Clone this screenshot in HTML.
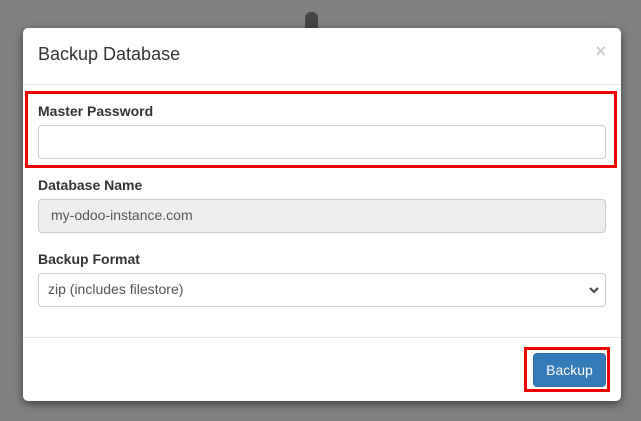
<!DOCTYPE html><html><head><style>
body{margin:0;width:641px;height:421px;background:#808080;position:relative;overflow:hidden;font-family:"Liberation Sans",sans-serif;color:#333}
.knob{position:absolute;left:305px;top:12px;width:13px;height:20px;background:#444;border-radius:6px 6px 0 0}
.modal{position:absolute;left:23px;top:28px;width:598px;height:373px;background:#fff;border-radius:5px;box-shadow:0 3px 9px rgba(0,0,0,.5)}
.title{position:absolute;left:15px;top:16px;font-size:18px;color:#333}
.x{position:absolute;right:15px;top:13px;font-size:18px;font-weight:bold;color:#ccc}
.hl{position:absolute;left:0;right:0;height:1px;background:#e5e5e5}
.red{position:absolute;border:3px solid #e00;box-sizing:border-box}
label{position:absolute;left:15px;font-size:14px;font-weight:bold;color:#333}
.in{position:absolute;left:15px;width:568px;height:34px;border:1px solid #ccc;border-radius:4px;box-sizing:border-box;font-size:14px;color:#555;padding:7px 12px}
.btn{position:absolute;left:510px;top:325px;width:73px;height:34px;background:#337ab7;border:1px solid #2e6da4;border-radius:4px;box-sizing:border-box;color:#fff;font-size:14px;text-align:center;line-height:32px}
</style></head><body>
<div class="knob"></div>
<div class="modal">
<div class="title">Backup Database</div><div class="x">×</div>
<div class="hl" style="top:56px"></div>
<div class="red" style="left:2px;top:63px;width:592px;height:77px"></div>
<label style="top:75px">Master Password</label>
<div class="in" style="top:97px"></div>
<label style="top:149px">Database Name</label>
<div class="in" style="top:171px;background:#eee">my-odoo-instance.com</div>
<label style="top:223px">Backup Format</label>
<div class="in" style="top:245px;padding-left:9px;color:#555">zip (includes filestore)<svg style="position:absolute;right:6px;top:12px" width="10" height="8" viewBox="0 0 10 8"><path d="M1 2l4 4 4-4" stroke="#444" stroke-width="2" fill="none"/></svg></div>
<div class="hl" style="top:309px"></div>
<div class="red" style="left:501px;top:319px;width:86px;height:45px"></div>
<div class="btn">Backup</div>
</div>
</body></html>
